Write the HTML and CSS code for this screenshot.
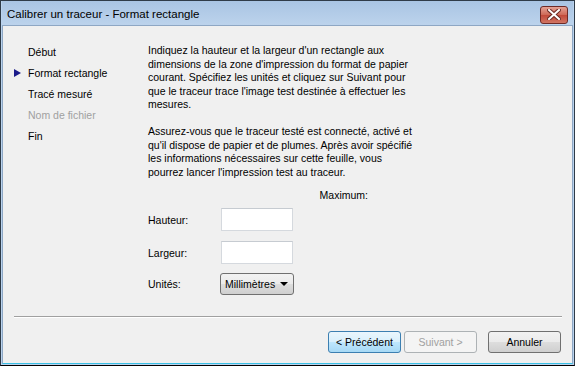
FILE: index.html
```html
<!DOCTYPE html>
<html lang="fr">
<head>
    <meta charset="UTF-8">
    <title>Calibrer un traceur</title>
    <link rel="stylesheet" href="styles.css">
</head>
<body>

<div class="window">
    <div class="titlebar">
        <span class="title">Calibrer un traceur - Format rectangle</span>
        <button class="close" type="button">
            <svg width="14" height="11" viewBox="0 0 14 11">
                <path d="M2 1 L12 10 M12 1 L2 10" stroke="#6b2b24" stroke-width="4" stroke-linecap="square"/>
                <path d="M2 1 L12 10 M12 1 L2 10" stroke="#ffffff" stroke-width="2" stroke-linecap="square"/>
            </svg>
        </button>
    </div>
    <div class="client">
        <div class="main">
            <ul class="steps">
                <li>Début</li>
                <li class="current">Format rectangle</li>
                <li>Tracé mesuré</li>
                <li class="disabled">Nom de fichier</li>
                <li>Fin</li>
            </ul>
            <div class="page">
                <p>Indiquez la hauteur et la largeur d'un rectangle aux<br>
                dimensions de la zone d'impression du format de papier<br>
                courant. Spécifiez les unités et cliquez sur Suivant pour<br>
                que le traceur trace l'image test destinée à effectuer les<br>
                mesures.</p>
                <p>Assurez-vous que le traceur testé est connecté, activé et<br>
                qu'il dispose de papier et de plumes. Après avoir spécifié<br>
                les informations nécessaires sur cette feuille, vous<br>
                pourrez lancer l'impression test au traceur.</p>
                <div class="form">
                    <div class="max-label">Maximum:</div>
                    <div class="field">
                        <label>Hauteur:</label>
                        <input type="text">
                    </div>
                    <div class="field">
                        <label>Largeur:</label>
                        <input type="text">
                    </div>
                    <div class="field units">
                        <label>Unités:</label>
                        <div class="combo">Millimètres <span class="arrow"></span></div>
                    </div>
                </div>
            </div>
        </div>
        <div class="separator"></div>
        <div class="buttons">
            <button class="btn default" type="button">&lt; Précédent</button>
            <button class="btn" type="button" disabled>Suivant &gt;</button>
            <button class="btn cancel" type="button">Annuler</button>
        </div>
    </div>
</div>

</body>
</html>
```

FILE: styles.css
```css
body {
    margin: 0;
    font-family: "Liberation Sans", Arial, sans-serif;
    font-size: 10.5px;
    color: #000;
    background: #fff;
}
.window {
    width: 575px;
    height: 366px;
    box-sizing: border-box;
    border: 1px solid #2f3b48;
    border-bottom-color: #000;
    background: #bad3ee;
    padding: 0 1px 1px 1px;
    display: flex;
    flex-direction: column;
}
.titlebar {
    height: 24px;
    flex-shrink: 0;
    display: flex;
    align-items: center;
    justify-content: space-between;
    padding: 0 5px 0 5px;
    background: linear-gradient(#a9c4e3, #bcd3ec);
}
.title {
    font-size: 11.5px;
    color: #000;
    margin-top: 1px;
}
.close {
    width: 28px;
    height: 18px;
    border: 1px solid #6e2a26;
    border-radius: 3px;
    background: linear-gradient(#e4a295, #cf6a58 48%, #c24a3a 52%, #d17563);
    padding: 0;
    display: flex;
    align-items: center;
    justify-content: center;
    margin-top: 3px;
}
.client {
    flex: 1;
    min-height: 0;
    background: #f0f0f0;
    border: 1px solid #8ea7c4;
    border-bottom: 1px solid #3ac0e5;
    display: flex;
    flex-direction: column;
}
.main {
    flex: 1;
    min-height: 0;
    display: flex;
}
.steps {
    list-style: none;
    margin: 0;
    padding: 16px 0 0 25px;
    width: 120px;
}
.steps li {
    height: 21px;
    line-height: 21px;
    position: relative;
}
.steps li.current::before {
    content: "";
    position: absolute;
    left: -14px;
    top: 6px;
    border-left: 7px solid #1b1b8a;
    border-top: 4px solid transparent;
    border-bottom: 4px solid transparent;
}
.steps li.disabled {
    color: #a0a0a0;
}
.page {
    padding: 18px 0 0 0;
    width: 275px;
}
.page p {
    margin: 0 0 13.5px 0;
    line-height: 13.5px;
    white-space: nowrap;
}
.page p + p {
    margin-bottom: 10px;
}
.form {
    width: 220px;
}
.max-label {
    text-align: right;
    height: 13px;
    line-height: 13px;
}
.field {
    display: flex;
    align-items: center;
    height: 23px;
    margin-top: 6px;
}
.field + .field {
    margin-top: 10px;
}
.field.units {
    height: 22px;
    margin-top: 9px;
}
.field label {
    width: 73px;
    flex-shrink: 0;
}
.field input {
    width: 72px;
    height: 23px;
    box-sizing: border-box;
    border: 1px solid #d5d9de;
    border-top-color: #c6cbd1;
    background: #fff;
    margin: 0;
}
.combo {
    width: 74px;
    height: 22px;
    box-sizing: border-box;
    border: 1px solid #707070;
    border-radius: 3px;
    background: linear-gradient(#f2f2f2, #ebebeb 48%, #dddddd 52%, #cfcfcf);
    display: flex;
    align-items: center;
    justify-content: space-between;
    padding: 0 5px 0 4px;
    margin-left: -1px;
}
.arrow {
    border-top: 4px solid #000;
    border-left: 4px solid transparent;
    border-right: 4px solid transparent;
}
.separator {
    flex-shrink: 0;
    margin: 0 10px 0 11px;
    border-top: 1px solid #a0a0a0;
    border-bottom: 1px solid #ffffff;
}
.buttons {
    flex-shrink: 0;
    display: flex;
    justify-content: flex-end;
    padding: 13px 11px 10px 0;
}
.btn {
    width: 73px;
    height: 22px;
    font-family: "Liberation Sans", Arial, sans-serif;
    font-size: 10.5px;
    border: 1px solid #707070;
    border-radius: 3px;
    background: linear-gradient(#f2f2f2, #ebebeb 48%, #dddddd 52%, #cfcfcf);
    color: #000;
    margin-left: 3px;
    padding: 0;
}
.btn.default {
    border-color: #3c7fb1;
    background: linear-gradient(#eaf6fd, #d9f0fc 48%, #bee6fd 52%, #a7d9f5);
}
.btn:disabled {
    border-color: #adb2b5;
    background: #f4f4f4;
    color: #a0a0a0;
}
.btn.cancel {
    margin-left: 11px;
}
```
